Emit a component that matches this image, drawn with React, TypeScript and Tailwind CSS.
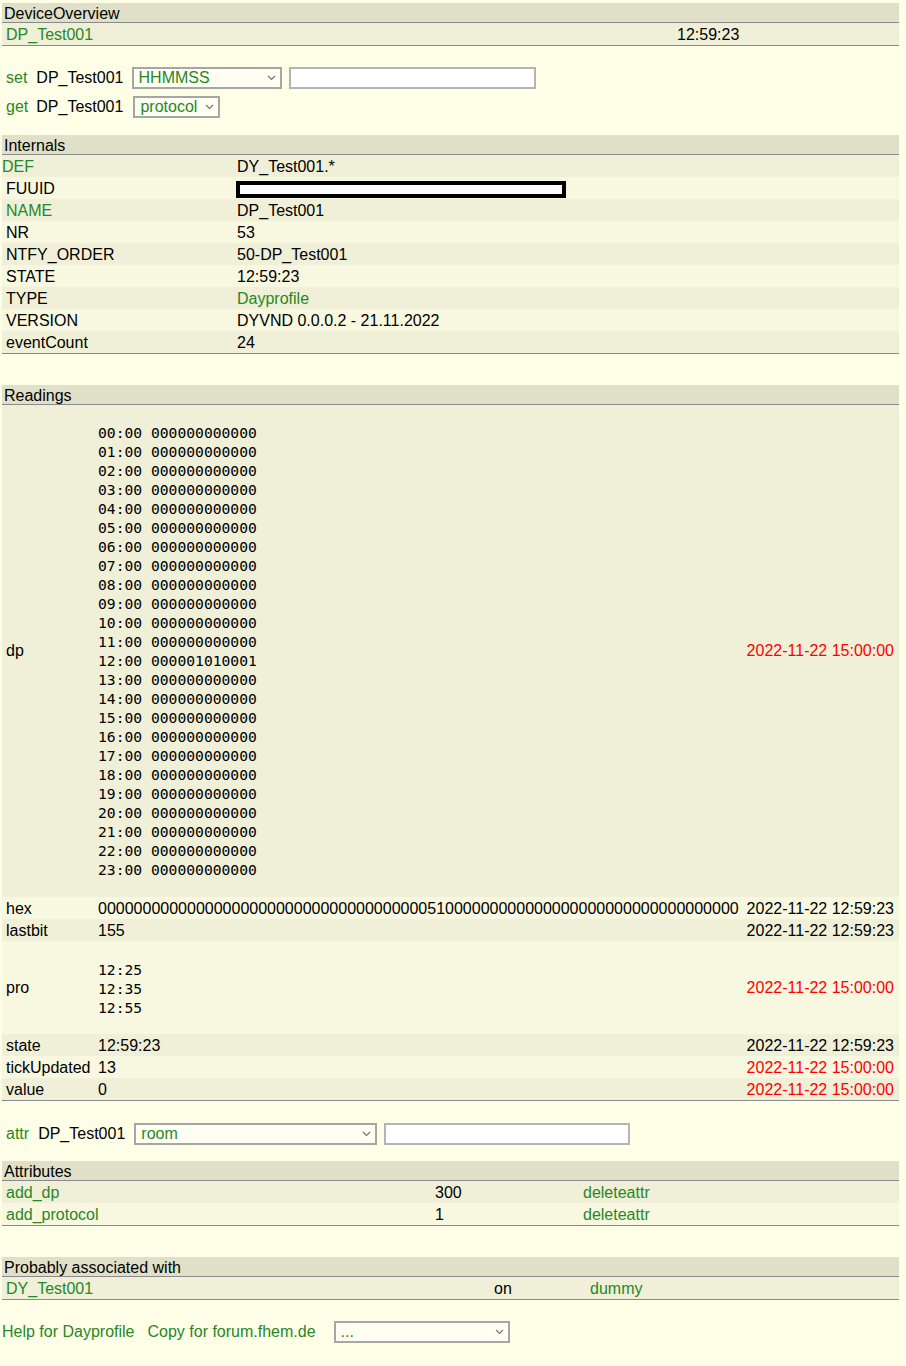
import React from "react";

const GREEN = "text-[#278727]";

function Chevron() {
  return (
    <svg width="9" height="6" viewBox="0 0 9 6" className="shrink-0">
      <path d="M1 1 L4.5 4.5 L8 1" fill="none" stroke="#707070" strokeWidth="1.1" />
    </svg>
  );
}

function FakeSelect({ text, className }: { text: string; className: string }) {
  return (
    <div
      className={
        "flex h-[22px] items-center justify-between border-2 border-[#a6a6a6] bg-[#fffff2] pl-[5px] pr-[4px] " +
        GREEN +
        " " +
        className
      }
    >
      <span className="leading-none">{text}</span>
      <Chevron />
    </div>
  );
}

function FakeInput({ className }: { className: string }) {
  return <div className={"h-[22px] border-2 border-[#b4b4b4] bg-white " + className} />;
}

const ODD = "bg-[#F0F0D8]";
const EVEN = "bg-[#F8F8E0]";
const ROW = "flex h-[22px] items-center pt-[2px] ";

function Header({ title }: { title: string }) {
  return (
    <div className="h-[20px] border-b border-[#8a8a8a] bg-[#E0E0C8] pl-[2px] pt-[2px] leading-[17px]">{title}</div>
  );
}

const hours = Array.from({ length: 24 }, (_, i) => {
  const h = String(i).padStart(2, "0");
  return `${h}:00 ${i === 12 ? "000001010001" : "000000000000"}`;
});

const hex = "0".repeat(37) + "51" + "0".repeat(33);

type Reading = {
  name: string;
  value: React.ReactNode;
  ts: string;
  red: boolean;
  tall?: boolean;
};

const MONO = "m-0 font-['DejaVu_Sans_Mono',monospace] text-[14.67px] leading-[19px] ";

const readings: Reading[] = [
  {
    name: "dp",
    value: <pre className={MONO + "pt-[18px] pb-[18px]"}>{hours.join("\n")}</pre>,
    ts: "2022-11-22 15:00:00",
    red: true,
    tall: true,
  },
  { name: "hex", value: hex, ts: "2022-11-22 12:59:23", red: false },
  { name: "lastbit", value: "155", ts: "2022-11-22 12:59:23", red: false },
  {
    name: "pro",
    value: <pre className={MONO + "pt-[19px] pb-[17px]"}>{"12:25\n12:35\n12:55"}</pre>,
    ts: "2022-11-22 15:00:00",
    red: true,
    tall: true,
  },
  { name: "state", value: "12:59:23", ts: "2022-11-22 12:59:23", red: false },
  { name: "tickUpdated", value: "13", ts: "2022-11-22 15:00:00", red: true },
  { name: "value", value: "0", ts: "2022-11-22 15:00:00", red: true },
];

export default function App() {
  const internals: {
    label: string;
    labelGreen?: boolean;
    noPad?: boolean;
    value: React.ReactNode;
    valueGreen?: boolean;
  }[] = [
    { label: "DEF", labelGreen: true, noPad: true, value: "DY_Test001.*" },
    {
      label: "FUUID",
      value: <div className="-ml-[1px] h-[17px] w-[330px] border-[4px] border-black bg-white" />,
    },
    { label: "NAME", labelGreen: true, value: "DP_Test001" },
    { label: "NR", value: "53" },
    { label: "NTFY_ORDER", value: "50-DP_Test001" },
    { label: "STATE", value: "12:59:23" },
    { label: "TYPE", value: "Dayprofile", valueGreen: true },
    { label: "VERSION", value: "DYVND 0.0.0.2 - 21.11.2022" },
    { label: "eventCount", value: "24" },
  ];

  return (
    <div className="min-h-[1366px] w-full overflow-hidden bg-[#FFFFE7] pt-[3px] font-['Liberation_Sans',Arial,sans-serif] text-[16px] text-black">
      {/* Device overview */}
      <div className="ml-[2px] w-[897px]">
        <Header title="DeviceOverview" />
        <div className={ROW + "h-[23px] border-b border-[#8a8a8a] " + ODD}>
          <div className={"w-[675px] pl-[4px] " + GREEN}>DP_Test001</div>
          <div>12:59:23</div>
        </div>
      </div>

      {/* set / get */}
      <div className="mt-[21px] flex h-[22px] items-center">
        <span className={"ml-[6px] " + GREEN}>set</span>
        <span className="ml-[9px]">DP_Test001</span>
        <FakeSelect text="HHMMSS" className="ml-[8px] w-[150px]" />
        <FakeInput className="ml-[7px] w-[247px]" />
      </div>
      <div className="mt-[7px] flex h-[22px] items-center">
        <span className={"ml-[6px] " + GREEN}>get</span>
        <span className="ml-[8px]">DP_Test001</span>
        <FakeSelect text="protocol" className="ml-[10px] w-[87px]" />
      </div>

      {/* Internals */}
      <div className="ml-[2px] mt-[17px] w-[897px] border-b border-[#8a8a8a]">
        <Header title="Internals" />
        {internals.map((r, i) => (
          <div key={r.label} className={ROW + (i % 2 === 0 ? ODD : EVEN)}>
            <div className={"w-[235px] " + (r.noPad ? "" : "pl-[4px] ") + (r.labelGreen ? GREEN : "")}>{r.label}</div>
            <div className={r.valueGreen ? GREEN : ""}>{r.value}</div>
          </div>
        ))}
      </div>

      {/* Readings */}
      <div className="ml-[2px] mt-[31px] w-[897px] border-b border-[#8a8a8a]">
        <Header title="Readings" />
        {readings.map((r, i) => (
          <div
            key={r.name}
            className={(r.tall ? "flex items-center " : ROW) + (i % 2 === 0 ? ODD : EVEN)}
          >
            <div className="w-[96px] shrink-0 pl-[4px]">{r.name}</div>
            <div className="flex-1">{r.value}</div>
            <div className={"pr-[5px] " + (r.red ? "text-[#FF0000]" : "")}>{r.ts}</div>
          </div>
        ))}
      </div>

      {/* attr */}
      <div className="mt-[22px] flex h-[22px] items-center">
        <span className={"ml-[6px] " + GREEN}>attr</span>
        <span className="ml-[9px]">DP_Test001</span>
        <FakeSelect text="room" className="ml-[9px] w-[243px]" />
        <FakeInput className="ml-[7px] w-[246px]" />
      </div>

      {/* Attributes */}
      <div className="ml-[2px] mt-[16px] w-[897px] border-b border-[#8a8a8a]">
        <Header title="Attributes" />
        {[
          ["add_dp", "300"],
          ["add_protocol", "1"],
        ].map(([k, v], i) => (
          <div key={k} className={ROW + (i % 2 === 0 ? ODD : EVEN)}>
            <div className={"w-[433px] pl-[4px] " + GREEN}>{k}</div>
            <div className="w-[148px]">{v}</div>
            <div className={GREEN}>deleteattr</div>
          </div>
        ))}
      </div>

      {/* Probably associated with */}
      <div className="ml-[2px] mt-[31px] w-[897px] border-b border-[#8a8a8a]">
        <Header title="Probably associated with" />
        <div className={ROW + ODD}>
          <div className={"w-[492px] pl-[4px] " + GREEN}>DY_Test001</div>
          <div className="w-[96px]">on</div>
          <div className={GREEN}>dummy</div>
        </div>
      </div>

      {/* Footer links */}
      <div className="mt-[21px] flex h-[22px] items-center">
        <span className={"ml-[2px] " + GREEN}>Help for Dayprofile</span>
        <span className={"ml-[13px] " + GREEN}>Copy for forum.fhem.de</span>
        <FakeSelect text="..." className="ml-[18px] w-[176px]" />
      </div>
    </div>
  );
}
